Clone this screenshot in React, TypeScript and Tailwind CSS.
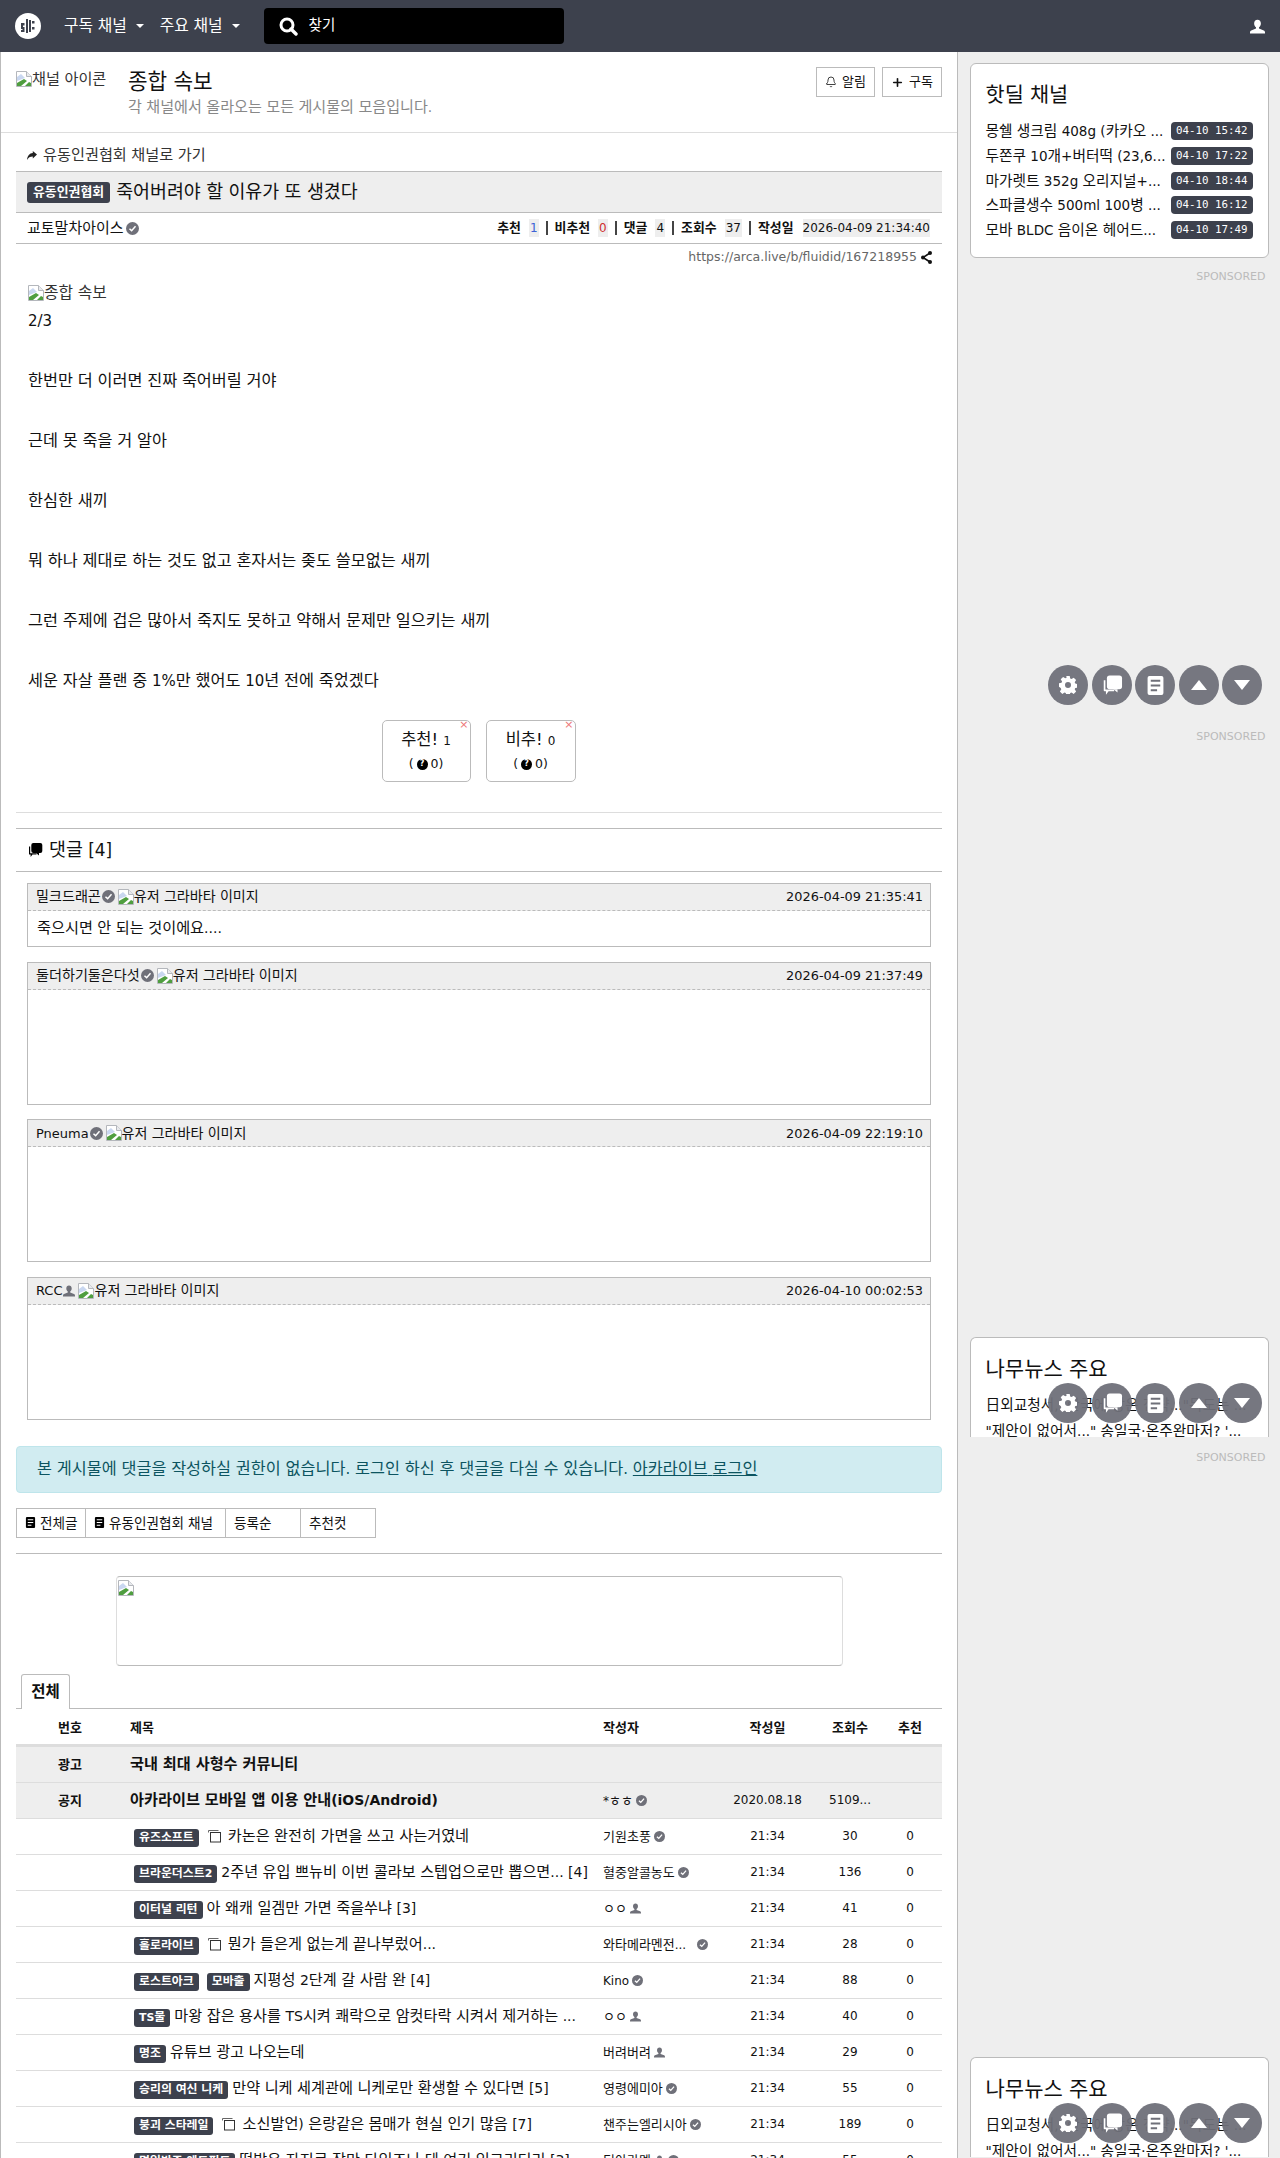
import { Bell, Plus } from 'lucide-react';

interface Row {
  badges: string[];
  title: string;
  icon?: boolean;
  author: string;
  kind: 'check' | 'user' | 'both';
  views: string;
  gap?: boolean;
}

const ROWS: Row[] = [
  { badges: ['유즈소프트'], icon: true, title: '카논은 완전히 가면을 쓰고 사는거였네', author: '기원초풍', kind: 'check', views: '30' },
  { badges: ['브라운더스트2'], title: '2주년 유입 쁘뉴비 이번 콜라보 스텝업으로만 뽑으면... [4]', author: '혈중알콜농도', kind: 'check', views: '136' },
  { badges: ['이터널 리턴'], title: '아 왜캐 일겜만 가면 죽을쑤냐 [3]', author: 'ㅇㅇ', kind: 'user', views: '41' },
  { badges: ['홀로라이브'], icon: true, title: '뭔가 들은게 없는게 끝나부렀어...', author: '와타메라멘전...', kind: 'check', views: '28', gap: true },
  { badges: ['로스트아크', '모바출'], title: '지평성 2단계 갈 사람 완 [4]', author: 'Kino', kind: 'check', views: '88' },
  { badges: ['TS물'], title: '마왕 잡은 용사를 TS시켜 쾌락으로 암컷타락 시켜서 제거하는 ...', author: 'ㅇㅇ', kind: 'user', views: '40' },
  { badges: ['명조'], title: '유튜브 광고 나오는데', author: '버려버려', kind: 'user', views: '29' },
  { badges: ['승리의 여신 니케'], title: '만약 니케 세계관에 니케로만 환생할 수 있다면 [5]', author: '영령에미아', kind: 'check', views: '55' },
  { badges: ['붕괴 스타레일'], icon: true, title: '소신발언) 은랑같은 몸매가 현실 인기 많음 [7]', author: '챈주는엘리시아', kind: 'check', views: '189' },
  { badges: ['명일방주 엔드필드'], title: '떡밥은 자지로 잠만 타임즈나 데 여기 있그리디리 [3]', author: '티아라멜', kind: 'both', views: '55' },
];

const DEALS = [
  ['몽쉘 생크림 408g (카카오 ...', '04-10 15:42'],
  ['두쫀쿠 10개+버터떡 (23,6...', '04-10 17:22'],
  ['마가렛트 352g 오리지널+...', '04-10 18:44'],
  ['스파클생수 500ml 100병 ...', '04-10 16:12'],
  ['모바 BLDC 음이온 헤어드...', '04-10 17:49'],
];

const LINES = [
  '한번만 더 이러면 진짜 죽어버릴 거야',
  '근데 못 죽을 거 알아',
  '한심한 새끼',
  '뭐 하나 제대로 하는 것도 없고 혼자서는 좆도 쓸모없는 새끼',
  '그런 주제에 겁은 많아서 죽지도 못하고 약해서 문제만 일으키는 새끼',
  '세운 자살 플랜 중 1%만 했어도 10년 전에 죽었겠다',
];

// 한글은 크게, 라틴 문자는 0.92em 으로 맞춘다
function Tx({ children }: { children: string }) {
  const parts = children.split(/([\x20-\x7e]+)/);
  return (
    <span>
      {parts.map((p, i) => (i % 2 ? <span key={i} className="text-[0.92em]">{p}</span> : p))}
    </span>
  );
}

function BrokenImage() {
  return (
    <svg width="16" height="16" viewBox="0 0 16 16" className="inline-block shrink-0 align-text-top">
      <path d="M0.5 0.5h10l5 5v10h-15z" fill="#fff" stroke="#b4b7bc" />
      <path d="M10.5 0.5v5h5" fill="#e8eaed" stroke="#b4b7bc" />
      <path d="M1 6 5 3l4 4-8 3z" fill="#c9d7f0" />
      <path d="M1 15v-3l7-4 3 2-6 5zM9 15l4-4 2 1v3z" fill="#4f9e3f" />
    </svg>
  );
}

function Check({ size = 13 }: { size?: number }) {
  return (
    <svg width={size} height={size} viewBox="0 0 12 12" className="inline-block shrink-0">
      <circle cx="6" cy="6" r="6" fill="#6f7079" />
      <path d="M3.2 6.2 5.2 8l3.6-4" fill="none" stroke="#fff" strokeWidth="1.4" />
    </svg>
  );
}

function Person({ size = 11, color = '#6f7079' }: { size?: number; color?: string }) {
  return (
    <svg width={size} height={size} viewBox="0 0 12 12" className="inline-block shrink-0">
      <path d="M6 0.5c1.7 0 2.7 1.2 2.7 3 0 1.4-.7 2.6-1.5 3v1l3.8 1.6c.6.3 1 .8 1 1.4v1H0v-1c0-.6.4-1.1 1-1.4l3.8-1.6v-1c-.8-.4-1.5-1.6-1.5-3 0-1.8 1-3 2.7-3z" fill={color} />
    </svg>
  );
}

function Comments({ size = 16, color = '#000' }: { size?: number; color?: string }) {
  return (
    <svg width={size} height={size} viewBox="0 0 16 16" className="inline-block shrink-0">
      <path d="M2 4.5h1.2v6.8h6.3v1.3H5.5L3.6 15v-2.4H2.6c-.4 0-.6-.3-.6-.6z" fill={color} />
      <rect x="4.3" y="1" width="11" height="10" rx="2" fill={color} />
      <path d="M9 11h3v2.5z" fill={color} />
    </svg>
  );
}

function DocIcon({ size = 12, color = '#000', line = '#fff' }: { size?: number; color?: string; line?: string }) {
  return (
    <svg width={size} height={size} viewBox="0 0 12 12" className="inline-block shrink-0">
      <rect x="1" y="0" width="10" height="12" rx="1.2" fill={color} />
      <path d="M3 3h6M3 6h6M3 9h4" stroke={line} strokeWidth="1.3" />
    </svg>
  );
}

function ImgIcon() {
  return (
    <svg width="13" height="13" viewBox="0 0 13 13" className="inline-block shrink-0">
      <path d="M0.5 2.5v-2h10" fill="none" stroke="#666" />
      <rect x="2.5" y="2.5" width="10" height="9.5" fill="#fff" stroke="#333" />
    </svg>
  );
}

function FloatButtons() {
  const btn = 'flex h-10 w-10 items-center justify-center rounded-full bg-[#6f7079]/95';
  return (
    <div className="absolute left-[1048px] flex gap-[3.5px]">
      <div className={btn}>
        <svg width="18" height="18" viewBox="0 0 18 18">
          <path fill="#fff" fillRule="evenodd" d="M7.3 0h3.4l.5 2.5 1.3.6 2.2-1.4 2.4 2.4-1.4 2.2.6 1.3 2.5.5v3.4l-2.5.5-.6 1.3 1.4 2.2-2.4 2.4-2.2-1.4-1.3.6-.5 2.5H7.3l-.5-2.5-1.3-.6-2.2 1.4-2.4-2.4 1.4-2.2-.6-1.3L0 10.7V7.3l2.5-.5.6-1.3-1.4-2.2 2.4-2.4 2.2 1.4 1.3-.6zM9 6a3 3 0 1 0 0 6 3 3 0 0 0 0-6z" />
        </svg>
      </div>
      <div className={btn}>
        <Comments size={22} color="#fff" />
      </div>
      <div className={btn}>
        <DocIcon size={19} color="#fff" line="#6f7079" />
      </div>
      <div className={btn}>
        <svg width="16" height="10" viewBox="0 0 16 10"><path d="M8 0l8 10H0z" fill="#fff" /></svg>
      </div>
      <div className={btn}>
        <svg width="16" height="10" viewBox="0 0 16 10"><path d="M0 0h16L8 10z" fill="#fff" /></svg>
      </div>
    </div>
  );
}

function Sponsored() {
  return <div className="pr-[3px] text-right text-[11px] leading-4 text-[#bbb]">SPONSORED</div>;
}

function NewsCard() {
  return (
    <div className="h-[100px] overflow-hidden rounded-t-[6px] border border-b-0 border-[#bbb] bg-white px-[15px] pt-[14px]">
      <div className="text-[21px] leading-[34px]"><Tx>나무뉴스 주요</Tx></div>
      <div className="mt-[5px] truncate text-[14.7px] leading-[25px]"><Tx>{`日외교청서, '한국에 강온 전략..."독도는 ...`}</Tx></div>
      <div className="truncate text-[14.7px] leading-[25px]"><Tx>{`"제안이 없어서..." 송일국·온주완마저? '...`}</Tx></div>
    </div>
  );
}

function CommentBox({ author, date, user, text }: { author: string; date: string; user?: boolean; text?: string }) {
  return (
    <div className="border border-[#bbb]">
      <div className="flex h-[27px] items-center justify-between border-b border-dashed border-[#bbb] bg-[#eee] pl-[8px] pr-[7px] text-[14.1px]">
        <div className="flex items-center gap-[1px]">
          <Tx>{author}</Tx>
          {user ? <Person size={12} /> : <Check />}
          <span className="ml-[2px] flex items-center"><BrokenImage /><Tx>유저 그라바타 이미지</Tx></span>
        </div>
        <span className="text-[12.9px]">{date}</span>
      </div>
      {text ? (
        <div className="flex h-[35px] items-center px-[9px] text-[15.2px]"><Tx>{text}</Tx></div>
      ) : (
        <div className="h-[114px]" />
      )}
    </div>
  );
}

function Stat({ label, value, color, last }: { label: string; value: string; color?: string; last?: boolean }) {
  return (
    <span className="flex items-center">
      <b className="font-bold">{label}</b>
      <span className={`ml-[8px] bg-[#eee] px-[1px] text-[12px] ${color ?? ''}`}>{value}</span>
      {!last && <span className="mx-[7px] h-[14px] w-[2px] bg-[#444]" />}
    </span>
  );
}

function Badge({ children }: { children: string }) {
  return (
    <span className="inline-flex h-[18px] shrink-0 items-center whitespace-pre rounded-[3px] bg-[#3d414d] px-[5px] text-[11.9px] font-bold text-white">
      <Tx>{children}</Tx>
    </span>
  );
}

export default function App() {
  const cols = 'grid grid-cols-[108px_473px_130px_81px_84px_36px] items-center';

  return (
    <div className="relative h-[2158px] overflow-hidden bg-[#eee] font-['DejaVu_Sans','Noto_Sans_CJK_KR',sans-serif] text-[#111]">
      {/* Navbar */}
      <nav className="flex h-[52px] items-center bg-[#3d414d] text-white">
        <div className="ml-[15px] flex h-[26px] w-[26px] items-center justify-center rounded-full bg-white">
          <svg width="18" height="18" viewBox="0 0 18 18">
            <path d="M8 2v14M11 3v12" stroke="#3d414d" strokeWidth="2" />
            <path d="M2 6h3.5v2.5H4V10h1.5v5H2v-2h1.5v-1H2zM13 4h2.5v2.5H13zM13 10h2.5v2.5H13z" fill="#3d414d" />
          </svg>
        </div>
        <div className="ml-[23px] flex items-center text-[15.8px]">
          <Tx>구독 채널</Tx>
          <span className="ml-[9px] mt-[1px] h-0 w-0 border-x-[4px] border-t-[4px] border-x-transparent border-t-white" />
        </div>
        <div className="ml-[16px] flex items-center text-[15.8px]">
          <Tx>주요 채널</Tx>
          <span className="ml-[9px] mt-[1px] h-0 w-0 border-x-[4px] border-t-[4px] border-x-transparent border-t-white" />
        </div>
        <div className="ml-[24px] flex h-[36px] w-[300px] items-center rounded-[4px] bg-black pl-[15px] text-[14.5px]">
          <svg width="19" height="19" viewBox="0 0 19 19">
            <circle cx="8" cy="8" r="6" fill="none" stroke="#fff" strokeWidth="3" />
            <path d="M12 12l5 5" stroke="#fff" strokeWidth="3.4" strokeLinecap="round" />
          </svg>
          <span className="ml-[11px]">찾기</span>
        </div>
        <div className="ml-auto mr-[15px]">
          <Person size={15} color="#fff" />
        </div>
      </nav>

      <div className="flex">
        {/* Main column */}
        <main className="h-[2106px] w-[958px] border-x border-[#bbb] bg-white">
          <div className="flex h-[81px] border-b border-[#ddd] pl-[15px] pr-[15px]">
            <div className="mt-[18px] flex h-[18px] w-[95px] items-center overflow-hidden whitespace-nowrap text-[15.2px] text-[#333]">
              <BrokenImage /><Tx>채널 아이콘</Tx>
            </div>
            <div className="ml-[17px] mt-[16px]">
              <div className="text-[21.3px] leading-[28px]"><Tx>종합 속보</Tx></div>
              <div className="text-[15.1px] leading-[20px] text-[#888]"><Tx>각 채널에서 올라오는 모든 게시물의 모음입니다.</Tx></div>
            </div>
            <div className="ml-auto mt-[15px] flex gap-[7px]">
              <div className="flex h-[30px] w-[59px] items-center justify-center gap-[5px] border border-[#bbb] text-[13px]">
                <Bell size={12} strokeWidth={1.6} />알림
              </div>
              <div className="flex h-[30px] w-[60px] items-center justify-center gap-[5px] border border-[#bbb] text-[13px]">
                <Plus size={13} strokeWidth={3} />구독
              </div>
            </div>
          </div>

          <div className="px-[15px]">
            <div className="flex h-[38px] items-center pl-[11px] pt-[6px] text-[15.2px] text-[#333]">
              <svg width="10" height="9" viewBox="0 0 10 9" className="mr-[6px]">
                <path d="M10 3.5 5.8 0v2C2.5 2.3 0.5 4.5 0 9c1.3-2.6 3-3.6 5.8-3.6V7.5z" fill="#222" />
              </svg>
              <Tx>유동인권협회 채널로 가기</Tx>
            </div>
            <div className="flex h-[42px] items-center gap-[6px] border-y border-[#bbb] bg-[#eee] pl-[11px]">
              <span className="inline-flex h-[21px] items-center rounded-[3px] bg-[#3d414d] px-[6px] text-[12.9px] font-bold text-white">유동인권협회</span>
              <span className="text-[18.4px]"><Tx>죽어버려야 할 이유가 또 생겼다</Tx></span>
            </div>
            <div className="flex h-[31px] items-center justify-between border-b border-[#bbb] pl-[11px] pr-[12px] text-[12.9px]">
              <span className="flex items-center gap-[2px] text-[15px]">교토말차아이스<Check /></span>
              <div className="flex items-center">
                <Stat label="추천" value="1" color="text-[#3d62d6]" />
                <Stat label="비추천" value="0" color="text-[#d03030]" />
                <Stat label="댓글" value="4" />
                <Stat label="조회수" value="37" />
                <b className="font-bold">작성일</b>
                <span className="ml-[9px] bg-[#eee] text-[12px]">2026-04-09 21:34:40</span>
              </div>
            </div>
            <div className="flex h-[27px] items-center justify-end gap-[4px] pr-[10px] text-[12.5px] text-[#666]">
              https://arca.live/b/fluidid/167218955
              <svg width="11" height="13" viewBox="0 0 11 13">
                <path d="M9 2 2 6.5 9 11" fill="none" stroke="#111" strokeWidth="1.6" />
                <circle cx="9" cy="2" r="2" fill="#111" /><circle cx="2" cy="6.5" r="2" fill="#111" /><circle cx="9" cy="11" r="2" fill="#111" />
              </svg>
            </div>

            {/* Article */}
            <div className="pl-[12px] pt-[13px] text-[16.3px] leading-[30px]">
              <div className="flex h-[18px] items-center text-[15.8px] leading-none text-[#333]"><BrokenImage /><Tx>종합 속보</Tx></div>
              <div className="mt-[4px]"><Tx>2/3</Tx></div>
              {LINES.map(line => (
                <div key={line} className="mt-[30px]"><Tx>{line}</Tx></div>
              ))}
            </div>

            {/* Votes */}
            <div className="mt-[24px] flex justify-center gap-[15px] pr-[1px]">
              {[['추천!', '1', 'w-[89px]'], ['비추!', '0', 'w-[90px]']].map(([label, n, w]) => (
                <div key={label} className={`relative flex h-[62px] flex-col items-center justify-center gap-[5px] rounded-[5px] border border-[#bbb] ${w}`}>
                  <span className="absolute right-[1px] top-[-4px] text-[11px] text-[#e77]">×</span>
                  <div className="flex items-baseline gap-[5px] text-[16.5px] leading-[20px]">{label}<span className="text-[12px]">{n}</span></div>
                  <div className="flex items-center gap-[3px] text-[12.5px] leading-[16px]">
                    <span>(</span><span className="inline-flex h-[11px] w-[11px] items-center justify-center rounded-full bg-black text-[8px] font-bold leading-none text-white">?</span><span>0)</span>
                  </div>
                </div>
              ))}
            </div>

            <div className="mt-[30px] border-t border-[#ddd]" />
            <div className="mt-[15px] flex h-[44px] items-center border-y border-[#bbb] pl-[11px] text-[18.4px]">
              <Comments size={16} />
              <span className="ml-[6px]"><Tx>댓글 [4]</Tx></span>
            </div>

            {/* Comments */}
            <div className="mt-[11px] flex flex-col gap-[14.67px] px-[11px]">
              <CommentBox author="밀크드래곤" date="2026-04-09 21:35:41" text="죽으시면 안 되는 것이에요...." />
              <CommentBox author="둘더하기둘은다섯" date="2026-04-09 21:37:49" />
              <CommentBox author="Pneuma" date="2026-04-09 22:19:10" />
              <CommentBox author="RCC" date="2026-04-10 00:02:53" user />
            </div>

            <div className="mt-[26px] flex h-[47px] items-center rounded-[4px] border border-[#bee5eb] bg-[#d1ecf1] pl-[20px] text-[16.3px] text-[#0c5460]">
              <span><Tx>본 게시물에 댓글을 작성하실 권한이 없습니다. 로그인 하신 후 댓글을 다실 수 있습니다. </Tx><u><Tx>아카라이브 로그인</Tx></u></span>
            </div>

            {/* Board links */}
            <div className="mt-[15px] flex h-[30px] text-[13.6px]">
              <div className="flex w-[70px] items-center gap-[4px] border border-[#bbb] pl-[8px]"><DocIcon size={11} />전체글</div>
              <div className="flex w-[140px] items-center gap-[4px] border border-l-0 border-[#bbb] pl-[8px]"><DocIcon size={11} /><Tx>유동인권협회 채널</Tx></div>
              <div className="flex w-[75px] items-center border border-l-0 border-[#bbb] pl-[8px]">등록순</div>
              <div className="flex w-[75px] items-center border border-l-0 border-[#bbb] pl-[8px]">추천컷</div>
            </div>
            <div className="mt-[15px] border-t border-[#bbb]" />

            <div className="ml-[100px] mt-[22px] h-[90px] w-[727px] rounded-[4px] border border-[#ddd] border-t-[#bbb] border-b-[#bbb] pl-[1px] pt-[1px]">
              <BrokenImage />
            </div>

            {/* Tabs */}
            <div className="relative mt-[8px] h-[35px] border-b border-[#bbb]">
              <div className="absolute left-[5px] top-0 flex h-[35px] w-[49px] items-center justify-center rounded-t-[3px] border border-b-0 border-[#bbb] bg-white pt-[1px] text-[15.5px] font-bold">전체</div>
            </div>

            {/* Table */}
            <div className={`${cols} h-[38px] border-b-[3px] border-[#ddd] pt-[2px] text-[13px] font-bold`}>
              <div className="text-center">번호</div>
              <div className="pl-[6px]">제목</div>
              <div className="pl-[6px]">작성자</div>
              <div className="text-center">작성일</div>
              <div className="text-center">조회수</div>
              <div className="text-center">추천</div>
            </div>
            <div className={`${cols} h-[36px] border-b border-[#ddd] bg-[#eee]`}>
              <div className="text-center text-[13px] font-bold">광고</div>
              <div className="pl-[6px] text-[15.2px] font-bold"><Tx>국내 최대 사형수 커뮤니티</Tx></div>
            </div>
            <div className={`${cols} h-[36px] border-b border-[#ddd] bg-[#eee] text-[12px]`}>
              <div className="text-center text-[13px] font-bold">공지</div>
              <div className="pl-[6px] text-[15.2px] font-bold"><Tx>아카라이브 모바일 앱 이용 안내(iOS/Android)</Tx></div>
              <div className="flex items-center gap-[3px] pl-[6px] text-[13px]"><Tx>*ㅎㅎ</Tx><Check size={11} /></div>
              <div className="text-center">2020.08.18</div>
              <div className="text-center">5109...</div>
            </div>
            {ROWS.map(row => (
              <div key={row.title} className={`${cols} h-[36px] border-b border-[#ddd] text-[12px]`}>
                <div />
                <div className="flex items-center gap-[4px] pl-[10px] text-[15.2px]">
                  {row.badges.map((b, i) => <span key={b} className={i > 0 ? 'ml-[4px]' : ''}><Badge>{b}</Badge></span>)}
                  {row.icon && <span className="ml-[5px] mr-[3px] flex"><ImgIcon /></span>}
                  <span className="truncate"><Tx>{row.title}</Tx></span>
                </div>
                <div className="flex items-center gap-[3px] whitespace-nowrap pl-[6px] text-[13px]">
                  <span className={row.gap ? 'w-[91px]' : ''}><Tx>{row.author}</Tx></span>
                  {row.kind !== 'check' && <Person size={11} />}
                  {row.kind !== 'user' && <Check size={11} />}
                </div>
                <div className="text-center">21:34</div>
                <div className="text-center">{row.views}</div>
                <div className="text-center">0</div>
              </div>
            ))}
          </div>
        </main>

        {/* Sidebar */}
        <aside className="w-[322px] px-[11.5px] pt-[11px]">
          <div className="rounded-[6px] border border-[#bbb] bg-white px-[15px] pb-[15px] pt-[14px]">
            <div className="text-[20.8px] leading-[34px]"><Tx>핫딜 채널</Tx></div>
            <div className="mt-[6px] flex flex-col">
              {DEALS.map(([title, time]) => (
                <div key={time} className="flex h-[24.7px] items-center justify-between whitespace-nowrap text-[14.7px]">
                  <Tx>{title}</Tx>
                  <span className="rounded-[4px] bg-[#3d414d] px-[5px] font-['DejaVu_Sans_Mono',monospace] text-[10.8px] leading-[18px] text-white">{time}</span>
                </div>
              ))}
            </div>
          </div>
          <div className="mt-[11px]"><Sponsored /></div>
          <div className="mt-[444px]"><Sponsored /></div>
          <div className="mt-[592px]"><NewsCard /></div>
          <div className="mt-[13px]"><Sponsored /></div>
          <div className="mt-[591px]"><NewsCard /></div>
        </aside>
      </div>

      <div className="absolute left-0 top-[665px] w-full"><FloatButtons /></div>
      <div className="absolute left-0 top-[1383px] w-full"><FloatButtons /></div>
      <div className="absolute left-0 top-[2103px] w-full"><FloatButtons /></div>
    </div>
  );
}
